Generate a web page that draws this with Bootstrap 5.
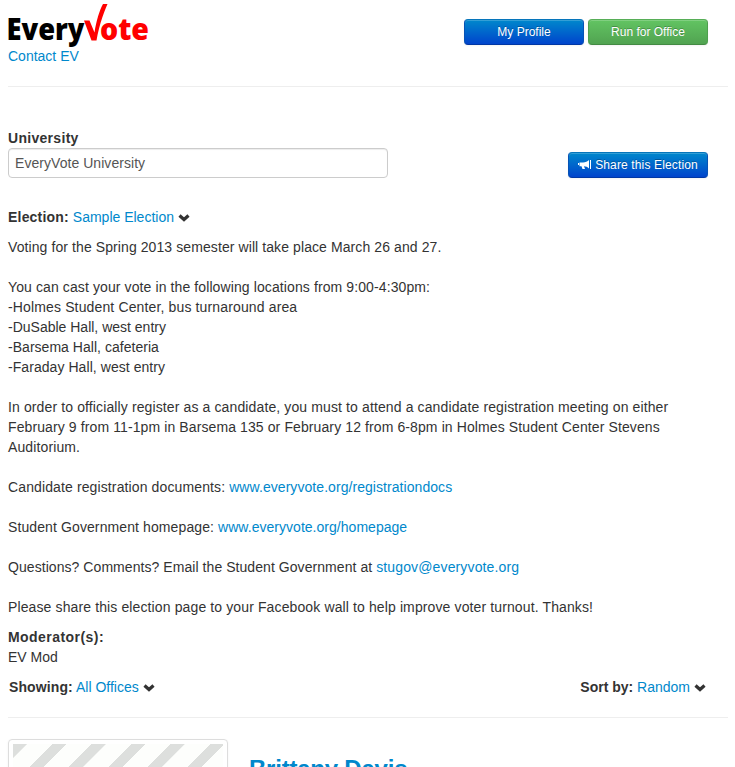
<!DOCTYPE html>
<html lang="en">
<head>
<meta charset="utf-8">
<title>EveryVote</title>
<meta name="viewport" content="width=device-width, initial-scale=1">
<link href="https://cdn.jsdelivr.net/npm/bootstrap@5.3.0/dist/css/bootstrap.min.css" rel="stylesheet">
<style>
html{overflow:hidden}
body{font:14px/20px "Liberation Sans",Arial,sans-serif;color:#333;height:767px;overflow:hidden;background:#fff}
a{color:#08c;text-decoration:none}
.page{width:720px;margin-left:8px}
.topbar{height:86px;padding-right:20px}
.logo{display:block;height:46px;overflow:visible}
.rule{height:1px;background:#eee}
.actions{padding-top:19px}
.ev-btn{font-size:12px;line-height:18px;height:26px;padding:3px 9px;border-radius:4px;color:#fff!important;text-shadow:0 -1px 0 rgba(0,0,0,.25);box-shadow:inset 0 1px 0 rgba(255,255,255,.2),0 1px 2px rgba(0,0,0,.05);border:1px solid;white-space:nowrap}
.ev-blue{background:linear-gradient(#08c,#04c)!important;border-color:#0675bb #0753b5 #0037a4}
.ev-green{background:linear-gradient(#62c462,#51a351)!important;border-color:#57ae57 #4f9f4f #438a43}
.w120{width:120px}
.w140{width:140px}
.uni-row{padding:41px 20px 0 0;height:120px}
.uni-input{width:380px;height:30px;padding:4px 6px;font-size:14px;line-height:20px;color:#555;letter-spacing:.05px;border:1px solid #ccc;border-radius:4px;box-shadow:inset 0 1px 1px rgba(0,0,0,.075)}
.chev{width:12px;height:8px;margin-left:4px}
.gap-top{margin-top:10px}
.foot{height:20px;padding:0 22px 0 1px}
.lower-rule{margin-top:20px}
.entry{margin-top:21px;height:29px}
.thumb{width:220px;height:220px;border:1px solid #ddd;border-radius:4px;padding:4px;box-shadow:0 1px 3px rgba(0,0,0,.055)}
.stripes{height:210px;background:repeating-linear-gradient(135deg,#dddfdd 0,#dddfdd 9.7px,#fdfefc 10.2px,#fdfefc 27.9px)}
.who{font-size:24px;line-height:40px;font-weight:700;letter-spacing:-.22px;margin:10px 0 0 21px}
.t3{letter-spacing:.03px}.t6{letter-spacing:.06px}.t9{letter-spacing:.09px}.t10{letter-spacing:.105px}.t12{letter-spacing:.12px}.t14{letter-spacing:.14px}.t20{letter-spacing:.2px}.t30{letter-spacing:.3px}.t45{letter-spacing:.45px}
</style>
</head>
<body>
<main class="page">
<header class="topbar d-flex justify-content-between">
  <div>
    <svg class="logo" width="144" height="46" viewBox="0 0 144 46" role="img" aria-label="EveryVote">
      <g font-family="Open Sans, sans-serif" font-weight="800" font-size="30.500">
        <text x="-1.500" y="40" textLength="78" lengthAdjust="spacingAndGlyphs" fill="#000">Every</text>
        <text x="92" y="40" textLength="49" lengthAdjust="spacingAndGlyphs" fill="#f00">ote</text>
      </g>
      <path d="M76 20.500H81.500L86.500 32.500C88 22 91.500 10 95 4H99.500C95 14 90.500 28 88.500 40.500H83.500Z" fill="#f00"/>
    </svg>
    <a href="#">Contact EV</a>
  </div>
  <div class="actions d-flex gap-1 align-items-start"><a class="btn ev-btn ev-blue w120" href="#">My Profile</a><a class="btn ev-btn ev-green w120" href="#">Run for Office</a></div>
</header>
<div class="rule"></div>
<section class="uni-row d-flex justify-content-between align-items-start">
  <div><label class="d-block fw-bold t30" for="uni">University</label><input id="uni" class="uni-input d-block" value="EveryVote University"></div>
  <a class="btn ev-btn ev-blue w140 t14 mt-4 d-flex align-items-center justify-content-center" href="#"><svg class="me-1" width="13" height="12" viewBox="0 0 13 12" fill="#fff"><path d="M1.500 3.500H5C7.500 3.500 9.500 2.500 11 1V9.500C9.500 8 8 7.300 6 7.200L7 10H4.500L3.500 7.200H1.500ZM12 1H13V10H12ZM0 4H1V6H0Z"/></svg>Share this Election</a>
</section>
<div><b class="t20">Election:</b> <a href="#">Sample Election<svg class="chev" viewBox="0 0 12 8"><path d="M1.500 1.500L6 5.500L10.500 1.500" fill="none" stroke="#333" stroke-width="3.200"/></svg></a></div>
<div class="gap-top">
<div class="t9">Voting for the Spring 2013 semester will take place March 26 and 27.</div><br>
<div class="t10">You can cast your vote in the following locations from 9:00-4:30pm:</div>
<div class="t14">-Holmes Student Center, bus turnaround area</div>
<div>-DuSable Hall, west entry</div>
<div class="t3">-Barsema Hall, cafeteria</div>
<div class="t6">-Faraday Hall, west entry</div><br>
<div class="t12">In order to officially register as a candidate, you must to attend a candidate registration meeting on either<br><span class="t10">February 9 from 11-1pm in Barsema 135 or February 12 from 6-8pm in Holmes Student Center Stevens</span><br><span>Auditorium.</span></div><br>
<div class="t12">Candidate registration documents: <a class="t6" href="#">www.everyvote.org/registrationdocs</a></div><br>
<div class="t10">Student Government homepage: <a class="t3" href="#">www.everyvote.org/homepage</a></div><br>
<div class="t6">Questions? Comments? Email the Student Government at <a class="t14" href="#">stugov@everyvote.org</a></div><br>
<div class="t12">Please share this election page to your Facebook wall to help improve voter turnout. Thanks!</div>
</div>
<div class="gap-top"><b class="t45">Moderator(s):</b><br>EV Mod</div>
<div class="foot d-flex justify-content-between gap-top">
<div><b class="t10">Showing:</b> <a href="#">All Offices<svg class="chev" viewBox="0 0 12 8"><path d="M1.500 1.500L6 5.500L10.500 1.500" fill="none" stroke="#333" stroke-width="3.200"/></svg></a></div>
<div><b>Sort by:</b> <a href="#">Random<svg class="chev" viewBox="0 0 12 8"><path d="M1.500 1.500L6 5.500L10.500 1.500" fill="none" stroke="#333" stroke-width="3.200"/></svg></a></div>
</div>
<div class="rule lower-rule"></div>
<section class="entry d-flex align-items-start"><div class="thumb"><div class="stripes"></div></div><a class="who" href="#">Brittany Davis</a></section>
</main>
<script src="https://cdn.jsdelivr.net/npm/bootstrap@5.3.0/dist/js/bootstrap.bundle.min.js"></script>
</body>
</html>
